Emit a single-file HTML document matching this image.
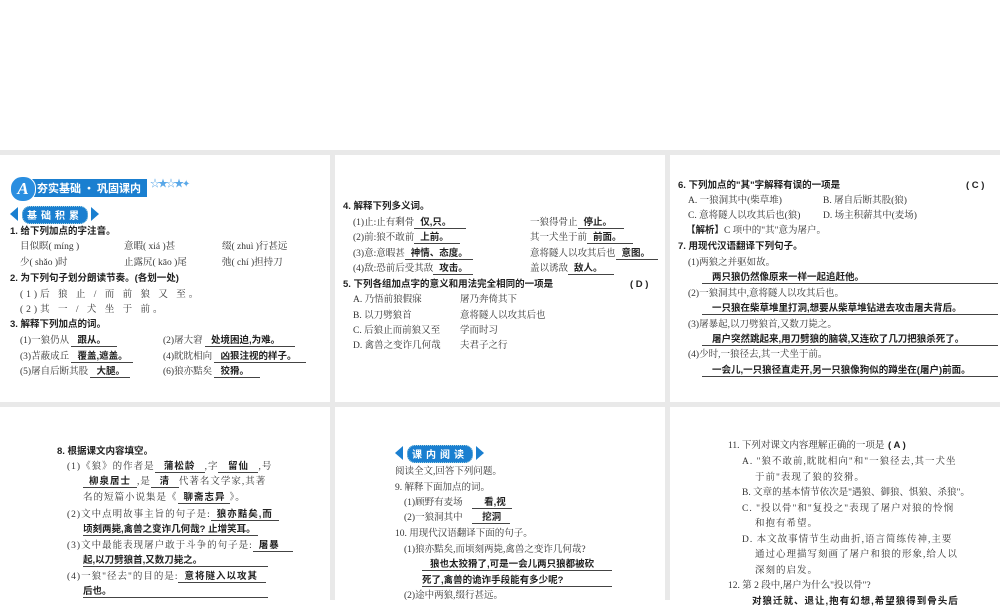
<!DOCTYPE html><html><head><meta charset="utf-8"><style>
body{margin:0;width:1000px;height:600px;background:#fff;position:relative;overflow:hidden;font-family:"Liberation Serif","Noto Serif CJK SC",serif;color:#333}
.bg{position:absolute;left:0;top:150px;width:1000px;height:450px;background:#e9e9e9}
.p{position:absolute;background:#fff}
.t{position:absolute;white-space:nowrap;font-size:9.5px;line-height:12px}
.b{font-family:"Liberation Sans","Noto Sans CJK SC",sans-serif;font-weight:bold;color:#222}
.a{font-family:"Liberation Sans","Noto Sans CJK SC",sans-serif;font-weight:bold;color:#222;border-bottom:1px solid #444;display:inline-block;padding:0 6px;line-height:11px}
.pill{position:absolute;height:16px;background:#1a7fd0;border-radius:8px;color:#fff;font-family:"Noto Sans CJK SC",sans-serif;font-weight:bold;font-size:10px;line-height:16px;text-align:center;letter-spacing:4px;border:1px dotted #9cd}
.tri{position:absolute;width:0;height:0;border-top:7px solid transparent;border-bottom:7px solid transparent}
</style></head><body>
<div class="bg"></div>
<div class="p" style="left:0;top:155px;width:330px;height:247px"></div>
<div class="p" style="left:335px;top:155px;width:330px;height:247px"></div>
<div class="p" style="left:670px;top:155px;width:330px;height:247px"></div>
<div class="p" style="left:0;top:407px;width:330px;height:193px"></div>
<div class="p" style="left:335px;top:407px;width:330px;height:193px"></div>
<div class="p" style="left:670px;top:407px;width:330px;height:193px"></div>

<!-- panel1 -->
<div style="position:absolute;left:22px;top:179px;width:125px;height:18px;background:#1a7fd0"></div>
<div style="position:absolute;left:10px;top:176px;width:24px;height:24px;border-radius:12px;background:#2a8ee0;border:1px solid #fff;color:#fff;font:italic bold 17px 'Liberation Serif';text-align:center;line-height:24px">A</div>
<div class="t" style="left:37px;top:182px;color:#fff;font-family:'Noto Sans CJK SC';font-weight:bold;font-size:11px">夯实基础 · 巩固课内</div>
<div class="t" style="left:150px;top:179px;color:#5aa8e8;font-size:10px;letter-spacing:-2px">☆★☆★✦</div>
<div class="tri" style="left:10px;top:207px;border-right:8px solid #1a7fd0"></div>
<div class="pill" style="left:22px;top:206px;width:64px">基础积累</div>
<div class="tri" style="left:91px;top:207px;border-left:8px solid #1a7fd0"></div>
<div class="t b" style="left:10px;top:226px">1. 给下列加点的字注音。</div>
<div class="t" style="left:20px;top:241px">目似瞑( míng )</div><div class="t" style="left:124px;top:241px">意暇( xiá )甚</div><div class="t" style="left:222px;top:241px">缀( zhuì )行甚远</div>
<div class="t" style="left:20px;top:257px">少( shǎo )时</div><div class="t" style="left:124px;top:257px">止露尻( kāo )尾</div><div class="t" style="left:222px;top:257px">弛( chí )担持刀</div>
<div class="t b" style="left:10px;top:273px">2. 为下列句子划分朗读节奏。(各划一处)</div>
<div class="t" style="left:20px;top:289px;letter-spacing:3px">(1)后 狼 止 / 而 前 狼 又 至。</div>
<div class="t" style="left:20px;top:304px;letter-spacing:3px">(2)其 一 / 犬 坐 于 前。</div>
<div class="t b" style="left:10px;top:319px">3. 解释下列加点的词。</div>
<div class="t" style="left:20px;top:335px">(1)一狼仍从 <span class="a" style="width:34px">跟从。</span></div><div class="t" style="left:163px;top:335px">(2)屠大窘 <span class="a" style="width:78px">处境困迫,为难。</span></div>
<div class="t" style="left:20px;top:351px">(3)苫蔽成丘 <span class="a" style="width:50px">覆盖,遮盖。</span></div><div class="t" style="left:163px;top:351px">(4)眈眈相向 <span class="a" style="width:80px">凶狠注视的样子。</span></div>
<div class="t" style="left:20px;top:366px">(5)屠自后断其股 <span class="a" style="width:28px">大腿。</span></div><div class="t" style="left:163px;top:366px">(6)狼亦黠矣 <span class="a" style="width:34px">狡猾。</span></div>

<!-- panel2 -->
<div class="t b" style="left:343px;top:201px">4. 解释下列多义词。</div>
<div class="t" style="left:353px;top:217px">(1)止:止有剩骨<span class="a" style="width:40px">仅,只。</span></div><div class="t" style="left:530px;top:217px">一狼得骨止<span class="a" style="width:34px">停止。</span></div>
<div class="t" style="left:353px;top:232px">(2)前:狼不敢前<span class="a" style="width:34px">上前。</span></div><div class="t" style="left:530px;top:232px">其一犬坐于前<span class="a" style="width:34px">前面。</span></div>
<div class="t" style="left:353px;top:248px">(3)意:意暇甚<span class="a" style="width:56px">神情、态度。</span></div><div class="t" style="left:530px;top:248px">意将隧人以攻其后也<span class="a" style="width:30px">意图。</span></div>
<div class="t" style="left:353px;top:263px">(4)敌:恐前后受其敌<span class="a" style="width:28px">攻击。</span></div><div class="t" style="left:530px;top:263px">盖以诱敌<span class="a" style="width:34px">敌人。</span></div>
<div class="t b" style="left:343px;top:279px">5. 下列各组加点字的意义和用法完全相同的一项是</div><div class="t b" style="left:630px;top:279px">(  D  )</div>
<div class="t" style="left:353px;top:294px">A. 乃悟前狼假寐</div><div class="t" style="left:460px;top:294px">屠乃奔倚其下</div>
<div class="t" style="left:353px;top:310px">B. 以刀劈狼首</div><div class="t" style="left:460px;top:310px">意将隧人以攻其后也</div>
<div class="t" style="left:353px;top:325px">C. 后狼止而前狼又至</div><div class="t" style="left:460px;top:325px">学而时习</div>
<div class="t" style="left:353px;top:340px">D. 禽兽之变诈几何哉</div><div class="t" style="left:460px;top:340px">夫君子之行</div>

<!-- panel3 -->
<div class="t b" style="left:678px;top:180px">6. 下列加点的"其"字解释有误的一项是</div><div class="t b" style="left:966px;top:180px">(  C  )</div>
<div class="t" style="left:688px;top:195px">A. 一狼洞其中(柴草堆)</div><div class="t" style="left:823px;top:195px">B. 屠自后断其股(狼)</div>
<div class="t" style="left:688px;top:210px">C. 意将隧人以攻其后也(狼)</div><div class="t" style="left:823px;top:210px">D. 场主积薪其中(麦场)</div>
<div class="t" style="left:686px;top:225px"><b class="b">【解析】</b>C 项中的"其"意为屠户。</div>
<div class="t b" style="left:678px;top:241px">7. 用现代汉语翻译下列句子。</div>
<div class="t" style="left:688px;top:257px">(1)两狼之并驱如故。</div>
<div class="t" style="left:702px;top:272px"><span class="a" style="width:280px;padding-left:10px">两只狼仍然像原来一样一起追赶他。</span></div>
<div class="t" style="left:688px;top:288px">(2)一狼洞其中,意将隧人以攻其后也。</div>
<div class="t" style="left:702px;top:303px"><span class="a" style="width:280px;padding-left:10px">一只狼在柴草堆里打洞,想要从柴草堆钻进去攻击屠夫背后。</span></div>
<div class="t" style="left:688px;top:319px">(3)屠暴起,以刀劈狼首,又数刀毙之。</div>
<div class="t" style="left:702px;top:334px"><span class="a" style="width:280px;padding-left:10px">屠户突然跳起来,用刀劈狼的脑袋,又连砍了几刀把狼杀死了。</span></div>
<div class="t" style="left:688px;top:349px">(4)少时,一狼径去,其一犬坐于前。</div>
<div class="t" style="left:702px;top:365px"><span class="a" style="width:280px;padding-left:10px">一会儿,一只狼径直走开,另一只狼像狗似的蹲坐在(屠户)前面。</span></div>

<!-- row2 panel1 -->
<div class="t b" style="left:57px;top:446px">8. 根据课文内容填空。</div>
<div class="t" style="left:67px;top:461px;letter-spacing:1px">(1)《狼》的作者是<span class="a" style="width:38px;text-align:center">蒲松龄</span>,字<span class="a" style="width:28px;text-align:center">留仙</span>,号</div>
<div class="t" style="left:83px;top:476px;letter-spacing:1px"><span class="a" style="width:42px;text-align:center">柳泉居士</span>,是<span class="a" style="width:16px;text-align:center">清</span>代著名文学家,其著</div>
<div class="t" style="left:83px;top:492px;letter-spacing:1px">名的短篇小说集是《<span class="a" style="width:40px;text-align:center">聊斋志异</span>》。</div>
<div class="t" style="left:67px;top:509px;letter-spacing:1px">(2)文中点明故事主旨的句子是:<span class="a" style="width:56px">狼亦黠矣,而</span></div>
<div class="t" style="left:83px;top:524px"><span class="a" style="width:175px;padding:0">顷刻两毙,禽兽之变诈几何哉? 止增笑耳。</span></div>
<div class="t" style="left:67px;top:540px;letter-spacing:1px">(3)文中最能表现屠户敢于斗争的句子是:<span class="a" style="width:28px">屠暴</span></div>
<div class="t" style="left:83px;top:555px"><span class="a" style="width:185px;padding:0">起,以刀劈狼首,又数刀毙之。</span></div>
<div class="t" style="left:67px;top:571px;letter-spacing:1px">(4)一狼"径去"的目的是:<span class="a" style="width:76px">意将隧入以攻其</span></div>
<div class="t" style="left:83px;top:586px"><span class="a" style="width:185px;padding:0">后也。</span></div>

<!-- row2 panel2 -->
<div class="tri" style="left:395px;top:446px;border-right:8px solid #1a7fd0"></div>
<div class="pill" style="left:407px;top:445px;width:64px">课内阅读</div>
<div class="tri" style="left:476px;top:446px;border-left:8px solid #1a7fd0"></div>
<div class="t" style="left:395px;top:466px">阅读全文,回答下列问题。</div>
<div class="t" style="left:395px;top:482px">9. 解释下面加点的词。</div>
<div class="t" style="left:404px;top:497px">(1)顾野有麦场 &nbsp;&nbsp;&nbsp;<span class="a" style="width:28px;padding:0 0 0 12px">看,视</span></div>
<div class="t" style="left:404px;top:512px">(2)一狼洞其中 &nbsp;&nbsp;&nbsp;<span class="a" style="width:28px;padding:0 0 0 10px">挖洞</span></div>
<div class="t" style="left:395px;top:528px">10. 用现代汉语翻译下面的句子。</div>
<div class="t" style="left:404px;top:544px">(1)狼亦黠矣,而顷刻两毙,禽兽之变诈几何哉?</div>
<div class="t" style="left:422px;top:559px"><span class="a" style="width:182px;padding:0 0 0 8px">狼也太狡猾了,可是一会儿两只狼都被砍</span></div>
<div class="t" style="left:422px;top:575px"><span class="a" style="width:190px;padding:0">死了,禽兽的诡诈手段能有多少呢?</span></div>
<div class="t" style="left:404px;top:590px">(2)途中两狼,缀行甚远。</div>

<!-- row2 panel3 -->
<div class="t" style="left:728px;top:440px">11. 下列对课文内容理解正确的一项是</div><div class="t b" style="left:888px;top:440px">(  A  )</div>
<div class="t" style="left:742px;top:456px;letter-spacing:1px">A. "狼不敢前,眈眈相向"和"一狼径去,其一犬坐</div>
<div class="t" style="left:755px;top:472px;letter-spacing:1px">于前"表现了狼的狡猾。</div>
<div class="t" style="left:742px;top:487px">B. 文章的基本情节依次是"遇狼、御狼、惧狼、杀狼"。</div>
<div class="t" style="left:742px;top:503px;letter-spacing:1px">C. "投以骨"和"复投之"表现了屠户对狼的怜悯</div>
<div class="t" style="left:755px;top:518px;letter-spacing:1px">和抱有希望。</div>
<div class="t" style="left:742px;top:534px;letter-spacing:1px">D. 本文故事情节生动曲折,语言简练传神,主要</div>
<div class="t" style="left:755px;top:549px;letter-spacing:1px">通过心理描写刻画了屠户和狼的形象,给人以</div>
<div class="t" style="left:755px;top:565px;letter-spacing:1px">深刻的启发。</div>
<div class="t" style="left:728px;top:580px">12. 第 2 段中,屠户为什么"投以骨"?</div>
<div class="t b" style="left:752px;top:596px;letter-spacing:1px">对狼迁就、退让,抱有幻想,希望狼得到骨头后</div>
</body></html>
